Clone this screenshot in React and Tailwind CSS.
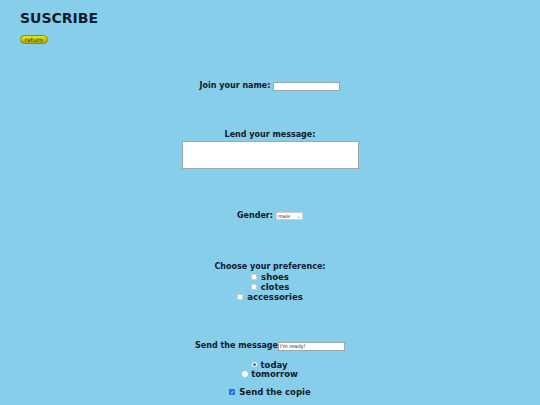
import React from "react";

export default function App() {
  return (
    <div className="min-h-screen bg-[#87ceeb] text-[#0d1b2a] font-['DejaVu_Sans',Verdana,sans-serif]">
      {/* Header */}
      <div className="px-5 pt-[10px]">
        <h1 className="text-[14px] font-bold leading-[16px]">SUSCRIBE</h1>
        <button className="mt-[9px] block w-[28px] h-[9px] rounded-full border border-[#8a8a00] bg-gradient-to-b from-[#f2e600] to-[#b5a800] text-[6px] leading-[7px] text-[#333] font-normal">
          return
        </button>
      </div>

      <form className="flex flex-col items-center text-[8px] font-bold leading-[10px]">
        {/* Name */}
        <div className="mt-[37px] flex items-center gap-[3px]">
          <label>Join your name:</label>
          <input
            type="text"
            className="w-[67px] h-[9px] bg-white border border-[#9aa] outline-none"
          />
        </div>

        {/* Message */}
        <label className="mt-[39px]">Lend your message:</label>
        <textarea className="mt-[1px] w-[177px] h-[28px] bg-white border border-[#9aa] resize-none outline-none" />

        {/* Gender */}
        <div className="mt-[42px] flex items-center gap-[3px]">
          <label>Gender:</label>
          <div className="w-[27px] h-[8px] bg-white border border-[#ccc] flex items-center justify-between px-[1px] text-[5px] font-normal leading-none text-[#333]">
            <span>male</span>
            <span className="text-[5px]">⌄</span>
          </div>
        </div>

        {/* Preference */}
        <label className="mt-[41px]">Choose your preference:</label>
        {["shoes", "clotes", "accessories"].map((p) => (
          <div key={p} className="h-[10px] flex items-center gap-[4px]">
            <span className="w-[6px] h-[6px] bg-white border border-[#ccc] rounded-[1px]" />
            <span className="text-[8.5px]">{p}</span>
          </div>
        ))}

        {/* Send */}
        <div className="mt-[39px] flex items-center">
          <label>Send the message</label>
          <div className="w-[67px] h-[9px] bg-white border border-[#9aa] text-[5px] font-normal leading-[7px] pl-[1px] text-[#222]">
            I'm ready!
          </div>
        </div>

        <div className="mt-[9px] h-[9px] flex items-center gap-[3px]">
          <span className="w-[5px] h-[5px] rounded-full bg-white flex items-center justify-center">
            <span className="w-[3px] h-[3px] rounded-full bg-[#1a73e8]" />
          </span>
          <span className="text-[8.5px]">today</span>
        </div>
        <div className="h-[9px] flex items-center gap-[3px]">
          <span className="w-[6px] h-[6px] rounded-full bg-white" />
          <span className="text-[8.5px]">tomorrow</span>
        </div>

        <div className="mt-[9px] flex items-center gap-[4px]">
          <span className="w-[6px] h-[6px] bg-[#1a73e8] rounded-[1px] flex items-center justify-center text-white text-[5px] leading-none">✓</span>
          <span className="text-[8.5px]">Send the copie</span>
        </div>
      </form>
    </div>
  );
}
